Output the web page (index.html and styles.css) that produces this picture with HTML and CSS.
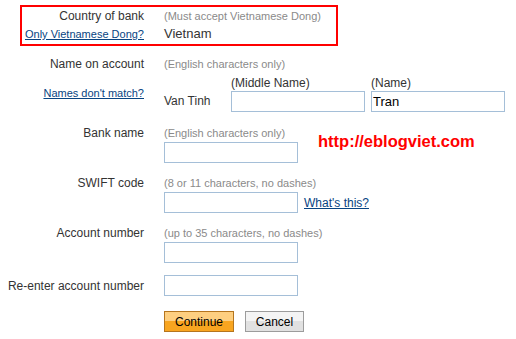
FILE: index.html
```html
<!DOCTYPE html>
<html lang="en">
<head>
  <meta charset="UTF-8" />
  <title>Add bank account</title>
  <link rel="stylesheet" href="styles.css">
</head>
<body>
  <form class="bank-form" action="#" method="POST">

    <div class="country-box">
      <div class="box-row">
        <span class="label">Country of bank</span>
        <span class="hint">(Must accept Vietnamese Dong)</span>
      </div>
      <div class="box-row">
        <a href="#" class="link small">Only Vietnamese Dong?</a>
        <span class="value">Vietnam</span>
      </div>
    </div>

    <div class="block name-block">
      <div class="row">
        <span class="label">Name on account</span>
        <span class="hint">(English characters only)</span>
      </div>
      <div class="row name-row">
        <a href="#" class="link small names-link">Names don't match?</a>
        <div class="name-fields">
          <span class="first-name">Van Tinh</span>
          <label class="name-part">
            <span class="sub-label">(Middle Name)</span>
            <input type="text" name="middle_name">
          </label>
          <label class="name-part">
            <span class="sub-label">(Name)</span>
            <input type="text" name="last_name" value="Tran">
          </label>
        </div>
      </div>
    </div>

    <div class="block bank-block">
      <div class="row">
        <span class="label">Bank name</span>
        <span class="hint">(English characters only)</span>
      </div>
      <div class="row">
        <span></span>
        <div class="field"><input type="text" name="bank_name"></div>
      </div>
      <div class="watermark">http://eblogviet.com</div>
    </div>

    <div class="block swift-block">
      <div class="row">
        <span class="label">SWIFT code</span>
        <span class="hint">(8 or 11 characters, no dashes)</span>
      </div>
      <div class="row">
        <span></span>
        <div class="field">
          <input type="text" name="swift">
          <a href="#" class="link whats-this">What's this?</a>
        </div>
      </div>
    </div>

    <div class="block account-block">
      <div class="row">
        <span class="label">Account number</span>
        <span class="hint">(up to 35 characters, no dashes)</span>
      </div>
      <div class="row">
        <span></span>
        <div class="field"><input type="text" name="account"></div>
      </div>
    </div>

    <div class="block reenter-block">
      <div class="row inline-row">
        <span class="label">Re-enter account number</span>
        <div class="field"><input type="text" name="account_confirm"></div>
      </div>
    </div>

    <div class="row buttons">
      <span></span>
      <div class="field">
        <button type="submit" class="btn primary">Continue</button>
        <button type="button" class="btn">Cancel</button>
      </div>
    </div>

  </form>
</body>
</html>
```

FILE: styles.css
```css
body {
  margin: 0;
  background: #fff;
  font-family: "Liberation Sans", Arial, sans-serif;
  font-size: 12px;
  color: #333;
}
.bank-form {
  padding-top: 5px;
}
.country-box {
  margin-left: 20px;
  width: 314px;
  border: 2px solid #f00;
  padding-bottom: 1px;
}
.box-row {
  display: grid;
  grid-template-columns: 122px 1fr;
  column-gap: 20px;
  align-items: baseline;
  line-height: 18px;
}
.box-row > :first-child,
.row > :first-child {
  text-align: right;
}
.row {
  display: grid;
  grid-template-columns: 144px 1fr;
  column-gap: 20px;
  align-items: baseline;
  line-height: 18px;
}
.label {
  color: #333;
}
.hint {
  font-size: 11px;
  color: #8a8a8a;
}
.value {
  font-size: 13px;
  color: #333;
}
.link {
  color: #084482;
  text-decoration: underline;
}
.link.small {
  font-size: 11px;
}
.block {
  position: relative;
}
.name-block {
  margin-top: 9px;
}
.name-row {
  margin-top: 2px;
  align-items: start;
}
.names-link {
  padding-top: 10px;
  line-height: 16px;
}
.name-fields {
  display: flex;
  align-items: flex-end;
}
.first-name {
  width: 67px;
  line-height: 21px;
  font-size: 12px;
}
.name-part {
  display: flex;
  flex-direction: column;
  margin-right: 6px;
  line-height: 16px;
}
.field {
  display: flex;
  align-items: center;
}
input {
  box-sizing: border-box;
  width: 134px;
  height: 21px;
  margin: 0;
  padding: 0 1px;
  border: 1px solid #a5bfd8;
  font-family: "Liberation Sans", Arial, sans-serif;
  font-size: 13px;
  color: #000;
  background: #fff;
}
.bank-block {
  margin-top: 12px;
}
.watermark {
  position: absolute;
  left: 318px;
  top: 7px;
  font-size: 16.5px;
  font-weight: bold;
  line-height: 20px;
  color: #f00;
}
.swift-block {
  margin-top: 11px;
}
.whats-this {
  margin-left: 6px;
  font-size: 12px;
  line-height: 18px;
}
.account-block {
  margin-top: 11px;
}
.reenter-block {
  margin-top: 12px;
}
.inline-row {
  align-items: center;
}
.buttons {
  margin-top: 15px;
}
.btn {
  box-sizing: border-box;
  height: 21px;
  margin: 0 11px 0 0;
  padding: 0;
  font-family: "Liberation Sans", Arial, sans-serif;
  font-size: 12px;
  color: #000;
  width: 59px;
  border: 1px solid #9c9c9c;
  background: linear-gradient(#f4f4f4 50%, #e1e1e1 50%);
  cursor: pointer;
}
.btn.primary {
  width: 70px;
  border-color: #b5751e;
  background: linear-gradient(#fecf80 50%, #f8a520 50%);
}
```
